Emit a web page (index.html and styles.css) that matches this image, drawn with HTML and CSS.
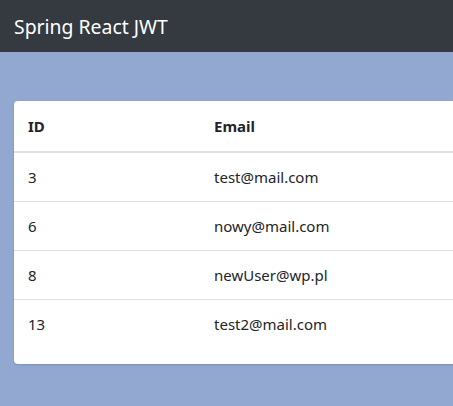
FILE: index.html
```html
<!DOCTYPE html>
<html>
<head>
<meta charset="utf-8">
<link rel="stylesheet" href="styles.css">
</head>
<body>
<nav class="navbar"><span class="brand">Spring React JWT</span></nav>
<main class="content">
  <div class="card">
    <table class="table">
      <thead>
        <tr><th class="col-id">ID</th><th>Email</th></tr>
      </thead>
      <tbody>
        <tr><td>3</td><td>test@mail.com</td></tr>
        <tr><td>6</td><td>nowy@mail.com</td></tr>
        <tr><td>8</td><td>newUser@wp.pl</td></tr>
        <tr><td>13</td><td>test2@mail.com</td></tr>
      </tbody>
    </table>
  </div>
</main>
</body>
</html>
```
FILE: styles.css
```css
html, body {
  margin: 0;
  height: 100%;
}
body {
  background: #92a8d1;
  font-family: "Noto Sans", "Open Sans", sans-serif;
  color: #212529;
  overflow: hidden;
}
.navbar {
  height: 52px;
  background: #343a40;
  display: flex;
  align-items: center;
  padding: 0 14px;
}
.brand {
  color: #fff;
  font-size: 19.4px;
}
.content {
  padding: 49px 0 0 14px;
}
.card {
  width: 700px;
  background: #fff;
  border-radius: 4px;
  box-shadow: 0 1px 2px rgba(0,0,0,0.15);
  padding-bottom: 16px;
}
.table {
  width: 100%;
  border-collapse: collapse;
  font-size: 15px;
}
.table th, .table td {
  text-align: left;
  padding: 12px 13px 12px 14px;
  line-height: 24px;
}
.table th {
  font-weight: 700;
  border-bottom: 2px solid #dee2e6;
  padding-top: 13px;
  padding-bottom: 13px;
}
.table tbody tr + tr td {
  border-top: 1px solid #dee2e6;
}
.col-id {
  width: 159px;
}
```
